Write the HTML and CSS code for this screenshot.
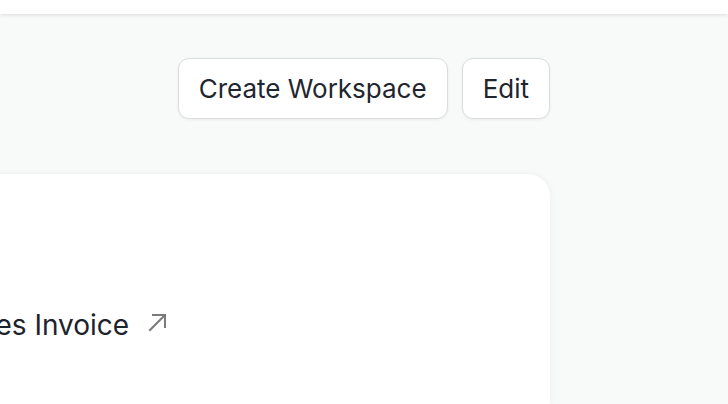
FILE: index.html
```html
<!DOCTYPE html>
<html>
<head>
<meta charset="utf-8">
<link rel="stylesheet" href="styles.css">
</head>
<body>
<header class="topbar"></header>
<main class="page">
  <div class="toolbar">
    <button class="btn">Create Workspace</button>
    <button class="btn">Edit</button>
  </div>
  <section class="card">
    <a class="card-link">Sales Invoice
      <svg class="arrow" width="19" height="19" viewBox="0 0 19 19" fill="none" stroke="#7a7a7a" stroke-width="2" stroke-linecap="square">
        <path d="M2 17 L16 3 M5 2 H17 V14"/>
      </svg>
    </a>
  </section>
</main>
</body>
</html>
```

FILE: styles.css
```css
html, body {
  margin: 0;
  padding: 0;
}
body {
  background: #f8f9f9;
  font-family: Inter, "Noto Sans", sans-serif;
  color: #1f2630;
  width: 728px;
  height: 404px;
  overflow: hidden;
}
.topbar {
  height: 14px;
  background: #ffffff;
  box-shadow: 0 1px 4px rgba(0, 0, 0, 0.12);
  position: relative;
  z-index: 1;
}
.page {
  width: 550px;
}
.toolbar {
  display: flex;
  justify-content: flex-end;
  gap: 14px;
  padding-top: 44px;
}
.btn {
  font-family: inherit;
  font-size: 26px;
  color: #1f2630;
  background: #ffffff;
  border: 1px solid #dcdede;
  border-radius: 11px;
  height: 61px;
  padding: 0 20px;
  box-shadow: 0 1px 3px rgba(0, 0, 0, 0.06);
}
.card {
  margin-top: 55px;
  margin-left: -200px;
  background: #ffffff;
  border-radius: 0 22px 0 0;
  height: 230px;
  box-shadow: 0 0 6px rgba(0, 0, 0, 0.06);
  padding-top: 134px;
  padding-left: 155px;
  box-sizing: border-box;
}
.card-link {
  font-size: 28px;
  color: #1c232c;
  display: inline-flex;
  align-items: center;
  gap: 19px;
}
.arrow {
  margin-top: -5px;
}
```
